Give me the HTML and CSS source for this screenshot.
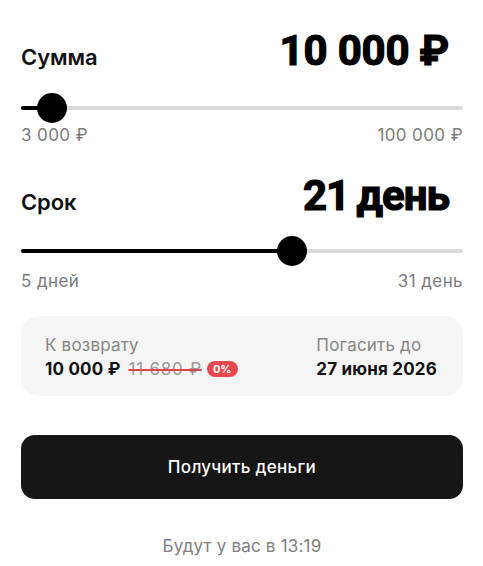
FILE: index.html
```html
<!DOCTYPE html>
<html lang="ru">
<head>
  <meta charset="UTF-8"/>
  <meta name="viewport" content="width=device-width,initial-scale=1"/>
  <title>Займ</title>
  <link rel="stylesheet" href="styles.css">
</head>
<body>

  <div id="app">
    <div class="head head-sum">
      <span class="label">Сумма</span>
      <span class="value">10 000 ₽</span>
    </div>
    <div class="slider slider-sum">
      <div class="track"><div class="fill" style="width: 31px"></div></div>
      <div class="thumb" style="left: 31px"></div>
    </div>
    <div class="range range-sum">
      <span>3 000 ₽</span>
      <span>100 000 ₽</span>
    </div>

    <div class="head head-term">
      <span class="label">Срок</span>
      <span class="value">21 день</span>
    </div>
    <div class="slider slider-term">
      <div class="track"><div class="fill" style="width: 271px"></div></div>
      <div class="thumb" style="left: 271px"></div>
    </div>
    <div class="range range-term">
      <span>5 дней</span>
      <span>31 день</span>
    </div>

    <div class="summary">
      <div class="col">
        <div class="muted">К возврату</div>
        <div class="strong">
          10 000 ₽
          <span class="old">11 680 ₽</span>
          <span class="badge">0%</span>
        </div>
      </div>
      <div class="col">
        <div class="muted">Погасить до</div>
        <div class="strong">27 июня 2026</div>
      </div>
    </div>

    <button class="cta" type="button">Получить деньги</button>

    <p class="eta">Будут у вас в 13:19</p>
  </div>

</body>
</html>
```

FILE: styles.css
```css
* {
  box-sizing: border-box;
}
body {
  margin: 0;
  font-family: Inter, 'Noto Sans', sans-serif;
  background: #fff;
  color: #111;
}

#app {
  padding: 26px 20px 0 21px;
}

.head {
  display: flex;
  justify-content: space-between;
  align-items: baseline;
}

.head .label {
  font-size: 22px;
  font-weight: 600;
  letter-spacing: -0.1px;
}

.head .value {
  font-family: Roboto, Inter, sans-serif;
  font-size: 42px;
  line-height: 50px;
  font-weight: 700;
  letter-spacing: -0.2px;
  -webkit-text-stroke: 1.2px #000;
  color: #000;
  margin-right: 14px;
}

.head-term .value {
  letter-spacing: -1px;
  word-spacing: -2px;
}

.head-term {
  margin-top: 26px;
}

.slider {
  position: relative;
  height: 30px;
  display: flex;
  align-items: center;
}
.slider-sum {
  margin-top: 17px;
}
.slider-term {
  margin-top: 15px;
}

.track {
  width: 100%;
  height: 4px;
  border-radius: 2px;
  background: #dadada;
}

.fill {
  height: 100%;
  border-radius: 2px;
  background: #000;
}

.thumb {
  position: absolute;
  top: 0;
  width: 30px;
  height: 30px;
  margin-left: -15px;
  border-radius: 50%;
  background: #000;
}

.range {
  display: flex;
  justify-content: space-between;
  font-size: 17px;
  line-height: 20px;
  letter-spacing: 0.4px;
  color: #7b7b7b;
}
.range-sum {
  margin-top: 2px;
}
.range-term {
  margin-top: 5px;
}

.summary {
  margin-top: 25px;
  display: flex;
  justify-content: space-between;
  padding: 17px 26px 15px 24px;
  background: #f5f5f5;
  border-radius: 18px;
  font-size: 17px;
  line-height: 24px;
}

.muted {
  color: #858585;
  letter-spacing: 0.2px;
}

.strong {
  font-weight: 700;
  letter-spacing: 0.2px;
  display: flex;
  align-items: center;
  gap: 8px;
}

.old {
  font-weight: 400;
  color: #9a9a9a;
  letter-spacing: 0.8px;
  text-decoration: line-through;
  text-decoration-color: #e0454c;
  text-decoration-thickness: 1.5px;
}

.badge {
  background: #e5484f;
  color: #fff;
  font-size: 11px;
  font-weight: 700;
  letter-spacing: 0;
  line-height: 16px;
  padding: 0 6px;
  border-radius: 8px;
  margin-left: -3px;
}

.cta {
  display: block;
  width: 100%;
  height: 64px;
  margin-top: 39px;
  border: none;
  border-radius: 14px;
  background: #161616;
  color: #fff;
  font-family: inherit;
  font-size: 17px;
  font-weight: 500;
  letter-spacing: 0.3px;
  cursor: pointer;
}

.eta {
  margin: 37px 0 0;
  text-align: center;
  font-size: 17px;
  line-height: 20px;
  letter-spacing: 0.2px;
  color: #808080;
}
```
